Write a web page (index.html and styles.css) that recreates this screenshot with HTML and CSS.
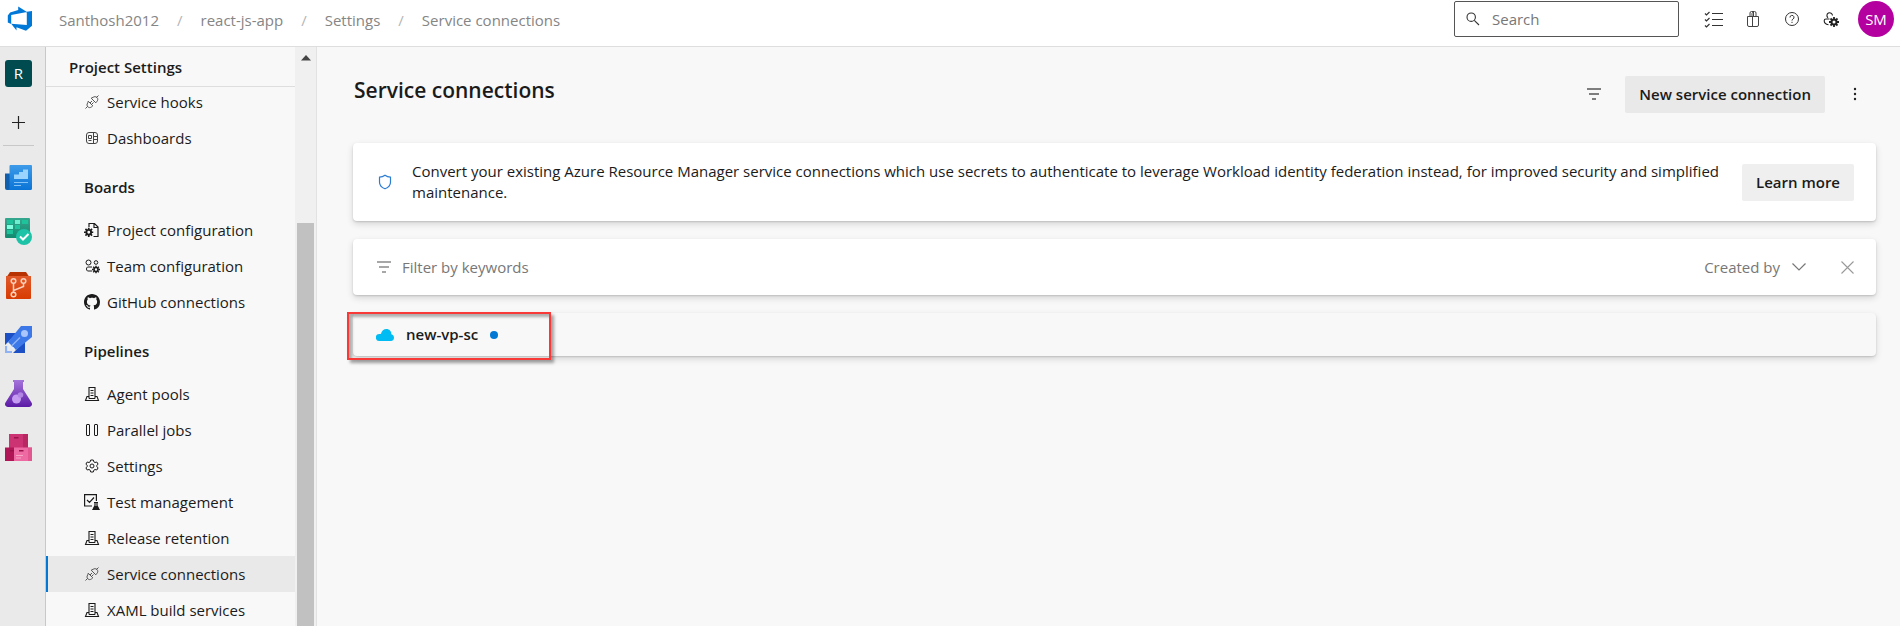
FILE: index.html
```html
<!DOCTYPE html>
<html lang="en">
<head>
<meta charset="utf-8">
<title>Service connections - Project Settings</title>
<link rel="stylesheet" href="styles.css">
</head>
<body>
<svg class="defs" aria-hidden="true">
  <symbol id="plug" viewBox="0 0 16 16"><g fill="none" stroke="#555" stroke-width="1"><path d="M1.500 14.500l2.200-2.200M12.300 3.700l2.200-2.200M4.200 7.200l4.600 4.600-1.300 1.100c-1.200 1-2.700.9-3.700-.1s-1.100-2.600 0-3.900zM7.200 4.200l4.600 4.600 1.300-1.600c1-1.200.9-2.700-.1-3.700s-2.600-1.100-3.900-.2zM6 9l2-2M7.500 10.500l2-2"/></g></symbol>
  <symbol id="pool" viewBox="0 0 16 16"><g fill="none" stroke="currentColor" stroke-width="1.1"><path d="M5 12.500V1.500h6v11M6.500 4.500h3M6.500 7h3M6.500 9.500h3M4.500 10.500H3l-1.500 4h13l-1.500-4h-1.500M5 12.500h6"/></g></symbol>
  <symbol id="gear" viewBox="0 0 16 16"><g fill="none" stroke="currentColor" stroke-width="1"><path d="M6.700 2h2.600l.5 1.800 1.200.7 1.800-.5 1.300 2.200-1.400 1.300v1l1.400 1.300-1.300 2.200-1.800-.5-1.200.7-.5 1.800H6.700l-.5-1.800-1.200-.7-1.800.5-1.300-2.200 1.400-1.300v-1L1.900 6.200 3.200 4l1.800.5 1.200-.7z"/><circle cx="8" cy="8" r="2"/></g></symbol>
  <symbol id="cog" viewBox="0 0 10 10"><path fill="none" stroke="currentColor" stroke-width="1.800" d="M5 0v2M5 8v2M0 5h2M8 5h2M1.500 1.500l1.400 1.400M7.100 7.100l1.400 1.400M1.500 8.500l1.400-1.400M7.100 2.900l1.400-1.400"/><circle cx="5" cy="5" r="2.500" fill="none" stroke="currentColor" stroke-width="2"/></symbol>
  <symbol id="filter" viewBox="0 0 14 14"><path d="M0 2h14M2 7h10M5 12h4" fill="none" stroke="currentColor" stroke-width="1.300"/></symbol>
</svg>

<header class="topbar">
  <a class="logo" href="#" aria-label="Azure DevOps"><svg width="26" height="26" viewBox="0 0 26 26"><path fill="#0078d7" d="M25 5v14.700l-6 5L9.500 21.300v3.300L4.200 17.800l15.600 1.200V5.800zM20 5.900L11.200.5v3.600L3.100 6.500.8 9.600v6.900l3.400 1.500V8.900z"/></svg></a>
  <nav class="crumbs" aria-label="Breadcrumb">
    <a href="#">Santhosh2012</a><i>/</i><a href="#">react-js-app</a><i>/</i><a href="#">Settings</a><i>/</i><a href="#">Service connections</a>
  </nav>
  <label class="search">
    <svg width="14" height="14" viewBox="0 0 14 14" fill="none" stroke="#333" stroke-width="1.100"><circle cx="5.200" cy="5.200" r="4.200"/><path d="M8.300 8.300l4.700 4.700"/></svg>
    <input type="text" placeholder="Search" aria-label="Search">
  </label>
  <div class="tools">
    <button class="icon" aria-label="Work items"><svg width="20" height="18" viewBox="0 0 20 18" fill="none" stroke="#333" stroke-width="1.200"><path d="M8 3.500h11M8 9.500h11M8 15.500h11M1 3.500l1.500 1.500L5.500 2M1 9.500L2.500 11l3-3M1 15.500L2.500 17l3-3"/></svg></button>
    <button class="icon" aria-label="Marketplace"><svg width="14" height="18" viewBox="0 0 14 18" fill="none" stroke="#444" stroke-width="1"><path d="M1.500 6.500h11V15a1.500 1.500 0 0 1-1.500 1.500H3A1.500 1.500 0 0 1 1.500 15zM6.500 6.500v10M4 6.500V3a1.500 1.500 0 0 1 1.500-1.500h3A1.500 1.500 0 0 1 10 3v3.500M6 6.500V3.500l1.500-2v5"/></svg></button>
    <button class="icon" aria-label="Help"><svg width="16" height="16" viewBox="0 0 16 16" fill="none" stroke="#333" stroke-width="1"><circle cx="8" cy="8" r="6.500"/><path d="M6 6.500a2 2 0 1 1 3 1.600c-.7.400-1 .7-1 1.500M8 10.800V12"/></svg></button>
    <button class="icon" aria-label="User settings"><svg width="16" height="16" viewBox="0 0 16 16" color="#222"><path d="M9.500 4.500A2.800 2.800 0 1 0 5 6.800M6.500 8H3a1.800 1.800 0 0 0-1.800 1.800C1.200 12 3 13.500 5.500 13.800" fill="none" stroke="currentColor" stroke-width="1.100"/><use href="#cog" x="6" y="6" width="10" height="10"/></svg></button>
    <button class="avatar" aria-label="Account">SM</button>
  </div>
</header>

<div class="shell">
  <nav class="rail" aria-label="Project">
    <a class="project" href="#">R</a>
    <button class="plus" aria-label="Add"><svg width="13" height="13" viewBox="0 0 13 13"><path d="M6.500 0v13M0 6.500h13" stroke="#222" stroke-width="1.200"/></svg></button>
    <hr>
    <a href="#" aria-label="Overview"><svg width="27" height="27" viewBox="0 0 27 27"><defs><linearGradient id="g1" x2="0" y2="1"><stop stop-color="#3d9be9"/><stop offset="1" stop-color="#0a74d6"/></linearGradient></defs><path fill="#0f5fae" d="M0 9.500h5V26H2a2 2 0 0 1-2-2z"/><path fill="url(#g1)" d="M5.500 1H26a1 1 0 0 1 1 1v22.500a1.500 1.500 0 0 1-1.500 1.500H3c1 0 1.500-1 1.500-2V2a1 1 0 0 1 1-1z"/><path fill="#9bd3ff" d="M9 10.500h5V8h4V5.500h5V15H9z"/><path d="M9 18.500h14M9 21.500h7" stroke="#83c3f7" stroke-width="1"/></svg></a>
    <a href="#" aria-label="Boards"><svg width="27" height="27" viewBox="0 0 27 27"><defs><linearGradient id="g2" x2="0" y2="1"><stop stop-color="#35a78e"/><stop offset="1" stop-color="#138a70"/></linearGradient></defs><path fill="url(#g2)" d="M1 0h23a1 1 0 0 1 1 1v19H1a1 1 0 0 1-1-1V1a1 1 0 0 1 1-1z"/><path fill="#1ec39c" d="M2 2h6v4H2zM17 2h6v4h-6zM10 7h5v4h-5zM2 12h6v4H2z"/><path fill="#6cf0cf" d="M10 2h5v4h-5z"/><path fill="#7dffe0" d="M2 7h6v4H2z"/><circle cx="19" cy="19" r="8" fill="#1dc3a7"/><path d="M15 18.500l3 3 5.500-5.500" fill="none" stroke="#fff" stroke-width="2"/></svg></a>
    <a href="#" aria-label="Repos"><svg width="27" height="27" viewBox="0 0 27 27"><defs><linearGradient id="g3" x2="0" y2="1"><stop stop-color="#e05a2b"/><stop offset="1" stop-color="#d83b01"/></linearGradient></defs><path fill="#b83303" d="M5 0h16l3 4.500H2z"/><path fill="url(#g3)" d="M1 4h25v22a1 1 0 0 1-1 1H2a1 1 0 0 1-1-1z"/><g fill="none" stroke="#ffd0bd" stroke-width="1.500"><circle cx="8.500" cy="9" r="2.300"/><circle cx="18.500" cy="9" r="2.300"/><circle cx="8.500" cy="22.500" r="2.300"/><path d="M8.500 11.500v8.500M18.500 11.500v3l-10 4"/></g></svg></a>
    <a href="#" aria-label="Pipelines"><svg width="27" height="27" viewBox="0 0 27 27"><path fill="#1c50c4" d="M0 7h12L0 19zM20 15v12H8z"/><path d="M1 20v6h6" fill="none" stroke="#8fb2f5" stroke-width="2.200"/><path fill="#3d78e8" d="M16 0h11v11L11 24l-8-8z"/><path fill="#e8effd" d="M3 18l2 .500 1 2 3 1 1 2.500-3-1-1-2-2.500-1z"/><circle cx="19.500" cy="7.500" r="3.500" fill="#a9c5fb"/><path d="M15 11.500L6.500 20" stroke="#8fb2f5" stroke-width="1.500"/></svg></a>
    <a href="#" aria-label="Test Plans"><svg width="27" height="27" viewBox="0 0 27 27"><defs><linearGradient id="g5" x2="0" y2="1"><stop stop-color="#a574db"/><stop offset="1" stop-color="#5b1ba5"/></linearGradient></defs><path fill="url(#g5)" d="M8 0h11v2h-1v7l8.500 13.500C28 25 26 27 24 27H3C1 27-1 25 .5 22.500L9 9V2H8z"/><circle cx="11.500" cy="19" r="4.500" fill="#c49bf0"/><circle cx="15.500" cy="15" r="2.800" fill="#b284e4"/></svg></a>
    <a href="#" aria-label="Artifacts"><svg width="27" height="27" viewBox="0 0 27 27"><path fill="#cc3372" d="M4 0h19v14H4z"/><path fill="#b92862" d="M18 0h5v14h-5z"/><path fill="#b01656" d="M0 13.500h9V27H0z"/><path fill="#ee6aa2" d="M9 13.500h18V27H9z"/><path fill="#e2578f" d="M23 13.500h4V27h-4z"/><path fill="#9b124b" d="M9 3h4.500v1.500H9zM5 16h4v1.500H5zM14 16h4.500v1.500H14z"/><path d="M11 21.500h7M11 24h5" stroke="#f8a4c6" stroke-width="1.200"/></svg></a>
  </nav>

  <aside class="sidebar">
    <div class="panel">
      <h2 class="panel-title">Project Settings</h2>
      <ul class="menu">
        <li><a href="#"><svg viewBox="0 0 16 16"><use href="#plug"/></svg>Service hooks</a></li>
        <li><a href="#"><svg viewBox="0 0 16 16" fill="none" stroke="#444" stroke-width="1"><rect x="2.500" y="2.500" width="11" height="11" rx="2.500"/><path d="M4.500 5.500h3v3h-3zM4.500 10.500h3M9.500 2.500v11M9.500 6.500h4M9.500 9.500h4"/></svg>Dashboards</a></li>
      </ul>
      <h3 class="group">Boards</h3>
      <ul class="menu">
        <li><a href="#"><svg viewBox="0 0 16 16"><path d="M5 5V1.500h5.500l3.500 3.500v9.500H9.500M10 1.500V5.500h4" fill="none" stroke="currentColor" stroke-width="1.200"/><use href="#cog" x="0" y="5.500" width="9.500" height="9.500"/></svg>Project configuration</a></li>
        <li><a href="#"><svg viewBox="0 0 16 16"><g fill="none" stroke="currentColor"><circle cx="4.500" cy="4.500" r="2.500"/><circle cx="12" cy="4.500" r="1.800"/><path d="M8 13H3.500a2.500 2.500 0 0 1 0-4H8"/></g><use href="#cog" x="8" y="7.500" width="8" height="8"/></svg>Team configuration</a></li>
        <li><a href="#"><svg viewBox="0 0 16 16"><path fill="currentColor" d="M8 0C3.580 0 0 3.580 0 8c0 3.540 2.290 6.530 5.470 7.590.4.070.550-.170.550-.380 0-.190-.010-.820-.010-1.490-2.010.370-2.530-.490-2.690-.940-.090-.230-.480-.940-.820-1.130-.280-.150-.680-.520-.010-.530.630-.010 1.080.580 1.230.820.720 1.210 1.870.870 2.330.660.070-.520.280-.870.510-1.070-1.780-.200-3.640-.890-3.640-3.950 0-.870.310-1.590.820-2.150-.080-.200-.360-1.020.080-2.120 0 0 .670-.210 2.200.820.640-.180 1.320-.270 2-.270s1.360.090 2 .270c1.530-1.040 2.200-.820 2.200-.820.440 1.100.160 1.920.080 2.120.510.560.820 1.270.820 2.150 0 3.070-1.870 3.750-3.650 3.950.290.250.540.730.540 1.480 0 1.070-.010 1.930-.010 2.200 0 .210.150.460.550.380A8.010 8.010 0 0 0 16 8c0-4.420-3.580-8-8-8z"/></svg>GitHub connections</a></li>
      </ul>
      <h3 class="group">Pipelines</h3>
      <ul class="menu">
        <li><a href="#"><svg viewBox="0 0 16 16"><use href="#pool"/></svg>Agent pools</a></li>
        <li><a href="#"><svg viewBox="0 0 16 16" fill="none" stroke="currentColor" stroke-width="1"><rect x="2.500" y="2.500" width="3" height="11" rx=".5"/><rect x="10.500" y="2.500" width="3" height="11" rx=".5"/></svg>Parallel jobs</a></li>
        <li><a href="#"><svg viewBox="0 0 16 16"><use href="#gear"/></svg>Settings</a></li>
        <li><a href="#"><svg viewBox="0 0 16 16"><path d="M8 12H.6V.6h11.800V7M3 6l2.500 2.500L10 3.500M10 8.500h4M11 8.500v3l-2 4h6l-2-4v-3" fill="none" stroke="currentColor" stroke-width="1.200"/><path fill="currentColor" d="M10.500 12h3l2 4h-7z"/></svg>Test management</a></li>
        <li><a href="#"><svg viewBox="0 0 16 16"><use href="#pool"/></svg>Release retention</a></li>
        <li><a class="current" href="#" aria-current="page"><svg viewBox="0 0 16 16"><use href="#plug"/></svg>Service connections</a></li>
        <li><a href="#"><svg viewBox="0 0 16 16"><use href="#pool"/></svg>XAML build services</a></li>
      </ul>
    </div>
    <div class="scroll" aria-hidden="true"><svg width="10" height="6" viewBox="0 0 10 6"><path d="M0 5.500L5 0l5 5.500z" fill="#444"/></svg><div class="thumb"></div></div>
  </aside>

  <main class="content">
    <div class="heading">
      <h1>Service connections</h1>
      <button class="icon dim" aria-label="Filter"><svg width="14" height="14"><use href="#filter"/></svg></button>
      <button class="btn strong">New service connection</button>
      <button class="icon" aria-label="More options"><svg width="4" height="14" viewBox="0 0 4 14" fill="#222"><circle cx="2" cy="2" r="1.200"/><circle cx="2" cy="7" r="1.200"/><circle cx="2" cy="12" r="1.200"/></svg></button>
    </div>

    <section class="card notice">
      <svg width="14" height="16" viewBox="0 0 14 16"><path d="M7 1.200c1.800 1.400 3.500 1.900 5.500 2v5c0 3-2 5.200-5.500 6.600C3.500 13.400 1.500 11.200 1.500 8.200v-5c2-.1 3.700-.6 5.500-2z" fill="none" stroke="#2b7cd3" stroke-width="1.200"/></svg>
      <p>Convert your existing Azure Resource Manager service connections which use secrets to authenticate to leverage Workload identity federation instead, for improved security and simplified maintenance.</p>
      <button class="btn">Learn more</button>
    </section>

    <section class="card filterbar">
      <svg width="14" height="14"><use href="#filter"/></svg>
      <input type="text" placeholder="Filter by keywords" aria-label="Filter by keywords">
      <button class="drop">Created by<svg width="14" height="8" viewBox="0 0 14 8" fill="none" stroke="#777" stroke-width="1.200"><path d="M.5.500L7 7l6.500-6.500"/></svg></button>
      <button class="clear" aria-label="Clear filters"><svg width="13" height="13" viewBox="0 0 13 13" stroke="#999" stroke-width="1.100"><path d="M.5.500l12 12M12.500.500l-12 12"/></svg></button>
    </section>

    <section class="card row">
      <svg width="18" height="12" viewBox="0 0 18 12"><path fill="#00bcf2" d="M3.500 12a3.500 3.500 0 0 1-.3-7c.8 0 1.300 0 1.800-.3C5.600 2 7.800.1 10.500.1c2.800 0 4.900 2.200 4.900 5.200C17 5.800 18 7 18 8.800c0 1.800-1.200 3.200-3 3.200z"/></svg>
      <a href="#">new-vp-sc</a>
      <span class="dot"></span>
      <div class="mark"></div>
    </section>
  </main>
</div>
</body>
</html>
```
FILE: styles.css
```css
* { box-sizing: border-box; }
html, body { height: 100%; }
body {
  margin: 0;
  display: flex;
  flex-direction: column;
  overflow: hidden;
  background: #f8f8f8;
  color: #1b1b1b;
  font: 15px/21px "Open Sans", "Noto Sans", sans-serif;
}
a { color: inherit; text-decoration: none; }
button, input { font: inherit; color: inherit; border: 0; background: none; padding: 0; }
svg { flex: none; display: block; }
h1, h2, h3, p, ul { margin: 0; padding: 0; }
ul { list-style: none; }
.defs { position: absolute; width: 0; height: 0; }

.topbar {
  display: flex;
  align-items: flex-start;
  flex: none;
  height: 47px;
  padding: 1px 6px 0 7px;
  background: #fff;
  border-bottom: 1px solid #dedede;
}
.logo { margin-top: 5px; }
.crumbs { display: flex; flex: 1; gap: 18px; margin: 9px 0 0 26px; color: #858585; }
.crumbs i { font-style: normal; color: #b5b5b5; }
.search {
  display: flex;
  align-items: center;
  gap: 12px;
  width: 225px;
  height: 36px;
  padding: 0 11px;
  border: 1px solid #555;
  border-radius: 2px;
}
.search input { width: 100%; min-width: 0; padding-top: 1px; }
input::placeholder { color: #777; opacity: 1; }
.tools { display: flex; align-items: center; height: 36px; margin-left: 15px; }
.icon { display: grid; place-items: center; width: 39px; height: 36px; }
.dim { color: #555; }
.avatar { width: 36px; height: 36px; margin-left: 8px; border-radius: 50%; background: #b4009e; color: #fff; }

.shell { display: flex; flex: 1; min-height: 0; }
.rail {
  display: flex;
  flex-direction: column;
  align-items: flex-start;
  gap: 27px;
  flex: none;
  width: 46px;
  padding: 13px 5px;
  background: #eaeaea;
  border-right: 1px solid #c8c8c8;
}
.project { width: 27px; height: 27px; border-radius: 3px; background: #004b50; color: #fff; text-align: center; line-height: 27px; }
.plus { display: grid; place-items: center; width: 27px; height: 16px; }
.rail hr { width: 31px; height: 1px; margin: -12px 0 -9px -2px; border: 0; background: #c8c8c8; }

.sidebar { display: flex; flex: none; width: 271px; border-right: 1px solid #e2e2e2; }
.panel { flex: 1; overflow: hidden; }
.panel-title { height: 40px; padding: 10px 23px; border-bottom: 1px solid #dedede; font-size: 15px; font-weight: 600; line-height: 21px; }
.panel-title + .menu { margin-top: -3px; }
.group { height: 56px; padding: 21px 38px 0; font-size: 15px; font-weight: 600; line-height: 21px; }
.menu a { display: flex; align-items: center; gap: 7px; height: 36px; padding-left: 38px; }
.menu svg { width: 16px; height: 16px; }
.menu .current { padding-left: 36px; border-left: 2px solid #0078d4; background: #e9e9e9; }
.scroll { display: flex; flex-direction: column; align-items: center; width: 21px; padding-top: 8px; background: #f0f0f0; }
.thumb { width: 17px; flex: 1; margin-top: 162px; background: #c1c1c1; }

.content { flex: 1; min-width: 0; padding: 29px 24px 0 36px; }
.heading { display: flex; height: 67px; align-items: flex-start; }
.heading h1 { flex: 1; padding-left: 1px; font-size: 21px; font-weight: 600; line-height: 28px; }
.heading .icon:last-child { width: 36px; margin-right: 3px; }
.btn { height: 37px; padding: 0 14px; border-radius: 2px; background: #efefef; font-weight: 600; font-size: 15px; white-space: nowrap; }
.strong { margin: 0 12px; background: #e9e9e9; }
.card {
  display: flex;
  align-items: center;
  margin-bottom: 18px;
  border-radius: 4px;
  background: #fff;
  box-shadow: 0 3px 7px rgba(0, 0, 0, .14), 0 1px 2px rgba(0, 0, 0, .14);
}
.notice { min-height: 78px; padding: 18px 22px 18px 25px; }
.notice p { flex: 1; margin: 0 10px 0 20px; }
.filterbar { height: 56px; padding: 0 22px 0 24px; color: #8a8a8a; }
.filterbar input { flex: 1; margin-left: 11px; }
.drop { display: flex; align-items: center; gap: 12px; margin-right: 35px; color: #777; }
.row { position: relative; height: 43px; padding: 0 23px; background: #f8f8f8; }
.row a { margin: 0 12px; font-weight: 600; }
.dot { width: 8px; height: 8px; border-radius: 50%; background: #0078d4; }
.mark {
  position: absolute;
  left: -6px;
  top: -1px;
  width: 204px;
  height: 48px;
  border: 2px solid #f93838;
  box-shadow: 3px 3px 3px rgba(0, 0, 0, .35), inset 3px 3px 3px rgba(0, 0, 0, .3);
}
```
